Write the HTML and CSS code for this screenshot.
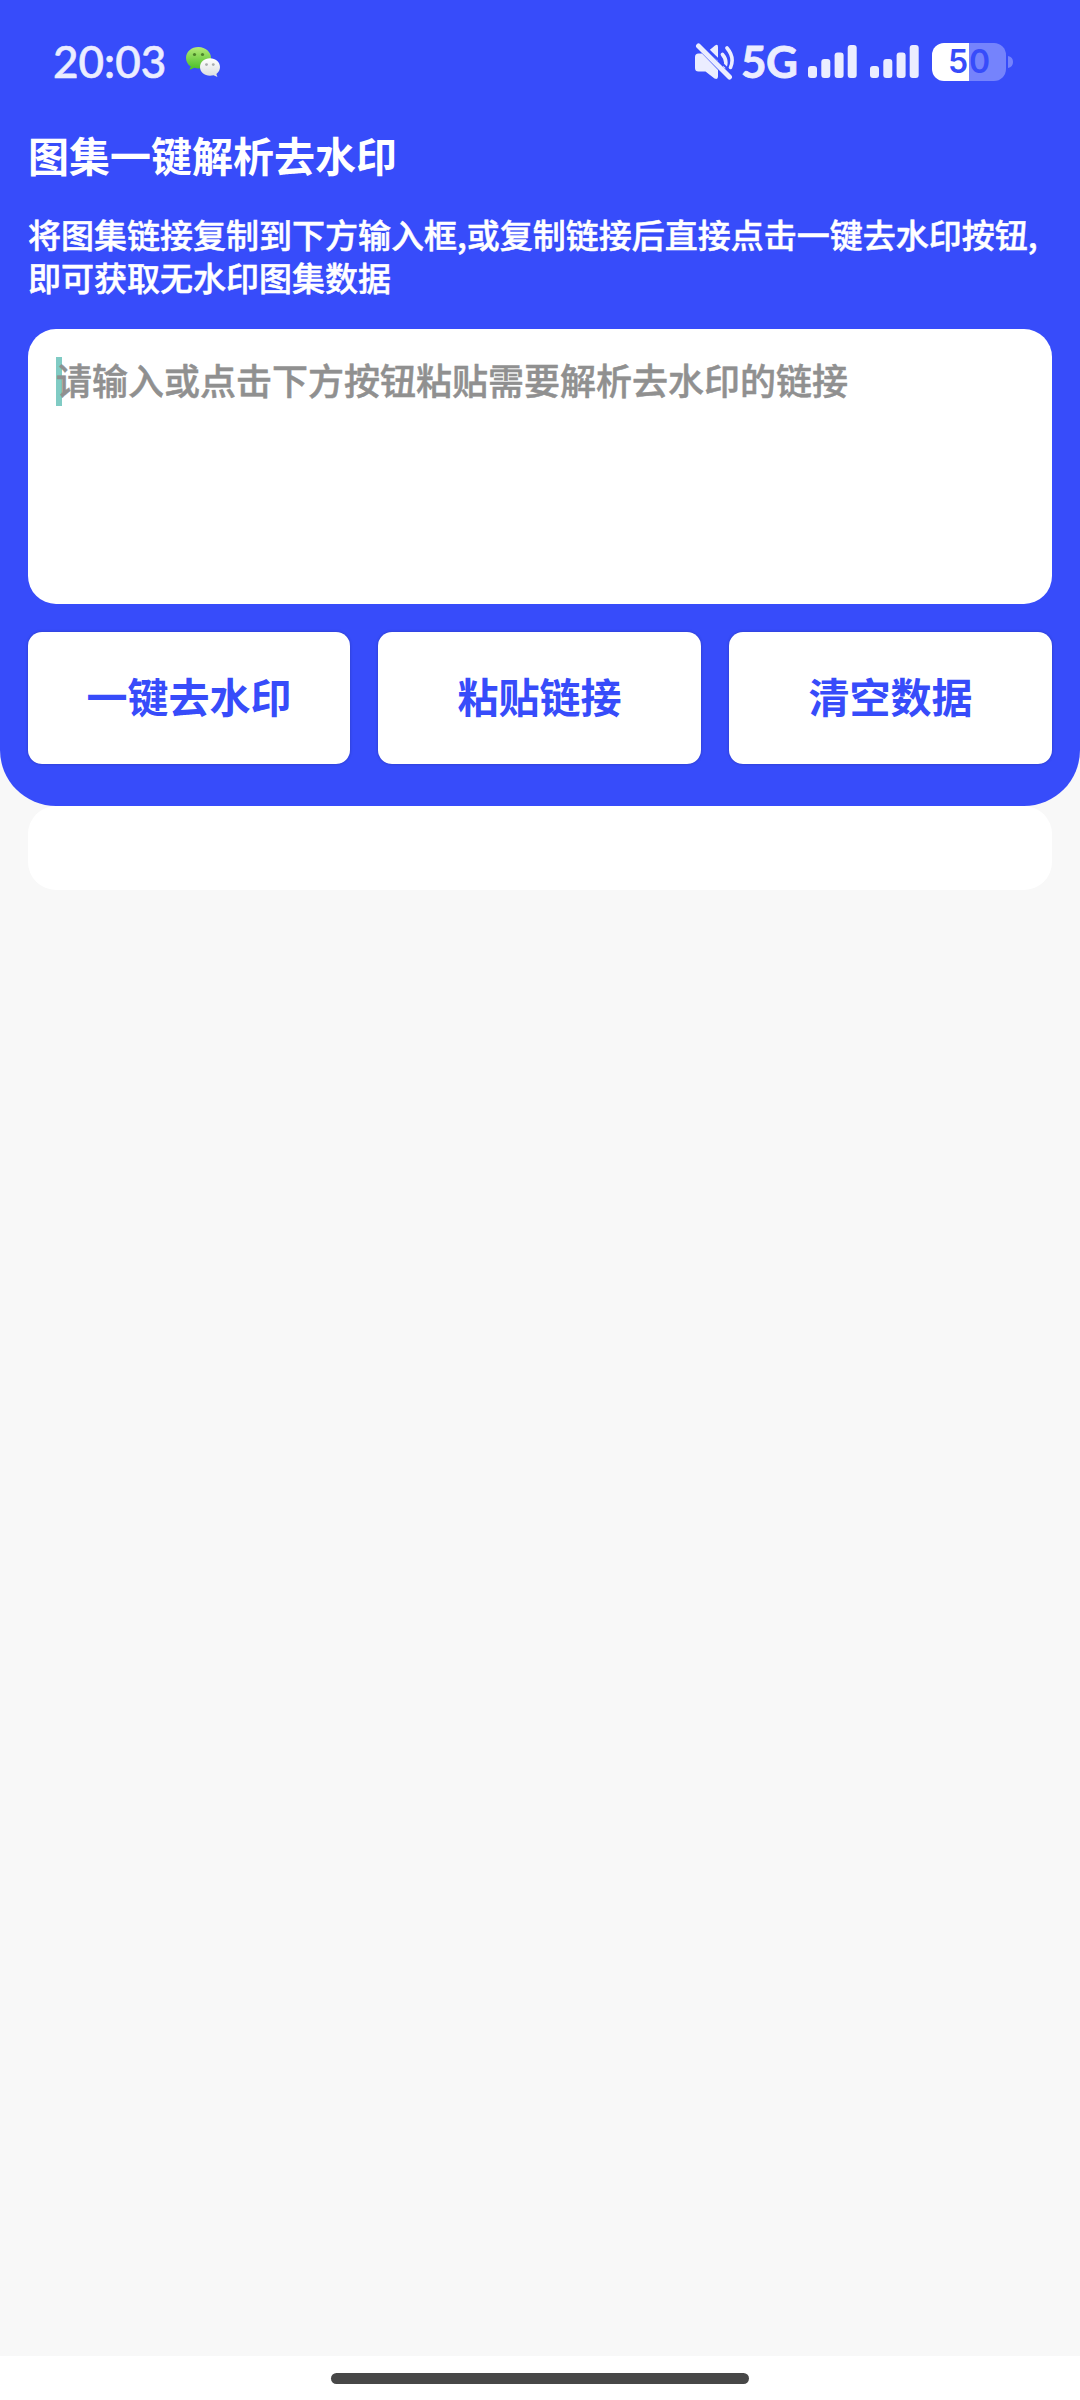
FILE: index.html
```html
<!DOCTYPE html>
<html lang="zh-CN">
<head>
<meta charset="utf-8">
<title>图集一键解析去水印</title>
<link rel="stylesheet" href="styles.css">
</head>
<body>
<div class="screen">
  <header class="hero">
    <div class="status">
      <span class="clock">20:03</span>
      <svg class="wechat" width="36" height="32" viewBox="0 0 36 32">
        <defs>
          <linearGradient id="green" x1="0" y1="0" x2="0" y2="1"><stop offset="0" stop-color="#b5ea78"/><stop offset="1" stop-color="#45bd25"/></linearGradient>
          <linearGradient id="white" x1="0" y1="0" x2="0" y2="1"><stop offset="0" stop-color="#ffffff"/><stop offset="1" stop-color="#d9dcdf"/></linearGradient>
        </defs>
        <path fill="url(#green)" d="M13.500 1C6.300 1 1 5.800 1 12c0 3.600 1.800 6.500 4.700 8.600L4.300 24l5-2.200c1.400.400 2.700.600 4.200.600C20.500 22.400 26 17.800 26 12S20.500 1 13.500 1z"/>
        <path fill="url(#white)" d="M25 12.300c-5.600 0-10 3.800-10 8.700s4.400 8.700 10 8.700c1.300 0 2.500-.2 3.600-.5l3.800 1.800-1-3.100c2.200-1.600 3.600-4 3.600-6.900 0-4.900-4.400-8.700-10-8.700z"/>
        <g fill="#4c8429"><circle cx="9.500" cy="8.500" r="1.600"/><circle cx="17.500" cy="8.500" r="1.600"/></g>
        <g fill="#a9adae"><circle cx="21.500" cy="18.600" r="1.400"/><circle cx="28.300" cy="18.600" r="1.400"/></g>
      </svg>
      <div class="indicators">
        <svg class="mute" width="40" height="38" viewBox="0 0 40 38">
          <path fill="#ebedff" d="M0 14q0-3.500 3.500-3.500H7L23 27v6.500q0 3.500-3.500 2L10.500 28.500h-7Q0 28.500 0 25zM14 7.500l6-5q3-2 3 1.500v14z"/>
          <g fill="none" stroke="#ebedff" stroke-width="3.600" stroke-linecap="round"><path d="M27.500 11.500q5 6 2.500 12M32 5q8 9.500 3.500 19.500"/></g>
          <path d="M6.500 0L40 33" stroke="#374cfa" stroke-width="2"/>
          <path d="M3.500 3L34.500 34" stroke="#ebedff" stroke-width="5" stroke-linecap="round"/>
        </svg>
        <span class="network">5G</span>
        <svg class="signal" width="49" height="33" viewBox="0 0 49 33" fill="#ebedff"><rect y="21" width="9" height="12" rx="3"/><rect x="13.300" y="14" width="9" height="19" rx="3"/><rect x="26.600" y="7.500" width="9" height="25.500" rx="3"/><rect x="39.700" width="9" height="33" rx="3"/></svg>
        <svg class="signal" width="49" height="33" viewBox="0 0 49 33" fill="#ebedff"><rect y="21" width="9" height="12" rx="3"/><rect x="13.300" y="14" width="9" height="19" rx="3"/><rect x="26.600" y="7.500" width="9" height="25.500" rx="3"/><rect x="39.700" width="9" height="33" rx="3"/></svg>
        <div class="battery"><span class="level">5</span><span class="rest">0</span></div>
        <svg class="nub" width="6" height="12" viewBox="0 0 6 12"><path d="M0 0q5 1 5 6t-5 6z" fill="#7583fc"/></svg>
      </div>
    </div>
    <h1 class="title">图集一键解析去水印</h1>
    <p class="intro">将图集链接复制到下方输入框,或复制链接后直接点击一键去水印按钮,<br>即可获取无水印图集数据</p>
    <div class="field"><span class="caret"></span><span class="placeholder">请输入或点击下方按钮粘贴需要解析去水印的链接</span></div>
    <div class="actions">
      <button class="action">一键去水印</button>
      <button class="action">粘贴链接</button>
      <button class="action">清空数据</button>
    </div>
  </header>
  <section class="result"></section>
  <footer class="navbar"><div class="handle"></div></footer>
</div>
</body>
</html>
```
FILE: styles.css
```css
* { box-sizing: border-box; }
body { margin: 0; }
.screen {
  width: 1080px;
  height: 2400px;
  display: flex;
  flex-direction: column;
  background: #f8f8f8;
  font-family: "Noto Sans CJK SC", sans-serif;
}
.hero {
  height: 806px;
  padding: 0 28px;
  background: #374cfa;
  border-radius: 0 0 56px 56px;
  color: #fff;
}
.status {
  display: flex;
  align-items: center;
  height: 123px;
  padding-left: 25px;
  color: #ebedff;
}
.clock { width: 132px; padding-bottom: 2px; font: 500 44px/50px Lato, sans-serif; -webkit-text-stroke: .6px #ebedff; }
.indicators { display: flex; align-items: center; margin-left: auto; padding-right: 38px; }
.mute { margin-right: 6px; }
.network { width: 67px; padding-bottom: 2px; font: 700 44px/50px Lato, sans-serif; letter-spacing: -.5px; -webkit-text-stroke: .8px #ebedff; }
.signal { margin-right: 13px; }
.battery {
  display: flex;
  width: 74px;
  height: 38px;
  border-radius: 12px;
  overflow: hidden;
  color: #374cfa;
  font: 600 32px/38px Inter, sans-serif;
}
.level { width: 37px; background: #fff; text-align: right; padding-right: 1px; }
.rest { width: 37px; background: #7583fc; }
.nub { margin-left: 2px; }
.title { margin: 0; height: 67px; font-size: 41px; line-height: 63px; font-weight: 700; }
.intro { margin: 23px 0 0; height: 116px; font-size: 33px; line-height: 43px; font-weight: 500; white-space: nowrap; -webkit-text-stroke: .5px #fff; }
.field {
  display: flex;
  height: 275px;
  padding: 28px;
  border-radius: 28px;
  background: #fff;
}
.caret { width: 6px; height: 49px; margin-right: -6px; background: #80cbc4; }
.placeholder { z-index: 1; color: #909090; font-size: 36px; line-height: 45px; font-weight: 500; -webkit-text-stroke: .5px #909090; }
.actions { display: grid; grid-template-columns: 322px 1fr 1fr; gap: 28px; margin-top: 28px; }
.action {
  height: 132px;
  padding: 0 0 5px;
  border: 0;
  border-radius: 14px;
  background: #fff;
  box-shadow: 0 0 3px rgba(0, 0, 0, .25);
  color: #374cfa;
  font: 700 41px/127px "Noto Sans CJK SC", sans-serif;
}
.result { height: 84px; margin: 0 28px; border-radius: 28px; background: #fff; }
.navbar { height: 44px; margin-top: auto; padding-top: 17px; background: #fff; }
.handle { width: 418px; height: 11px; margin: 0 auto; border-radius: 6px; background: #474747; }
```
